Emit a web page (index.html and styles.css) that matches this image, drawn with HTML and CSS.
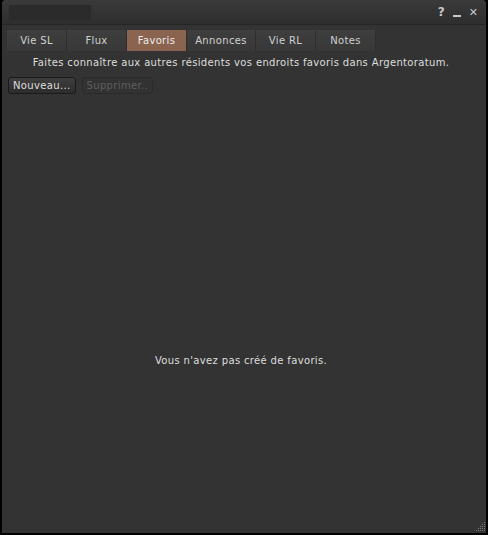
FILE: index.html
```html
<!DOCTYPE html>
<html lang="fr">
<head>
    <meta charset="UTF-8">
    <title>Favoris</title>
    <link rel="stylesheet" href="styles.css">
</head>
<body>
    <div class="floater">
        <div class="titlebar">
            <div class="title-slot"></div>
            <div class="title-buttons">
                <span class="tb-btn">?</span>
                <span class="tb-btn minimize"></span>
                <span class="tb-btn close">&#x2715;</span>
            </div>
        </div>
        <div class="tabs">
            <div class="tab">Vie SL</div>
            <div class="tab">Flux</div>
            <div class="tab active">Favoris</div>
            <div class="tab wide">Annonces</div>
            <div class="tab">Vie RL</div>
            <div class="tab">Notes</div>
        </div>
        <p class="hint">Faites connaître aux autres résidents vos endroits favoris dans Argentoratum.</p>
        <div class="actions">
            <button class="btn">Nouveau...</button>
            <button class="btn" disabled>Supprimer..</button>
        </div>
        <div class="picks-list">
            <div class="empty">Vous n'avez pas créé de favoris.</div>
        </div>
        <svg class="grip" width="12" height="12" viewBox="0 0 12 12">
            <g fill="#7a7a7a">
                <rect x="10" y="1" width="1" height="1"/>
                <rect x="8" y="3" width="1" height="1"/><rect x="10" y="3" width="1" height="1"/>
                <rect x="6" y="5" width="1" height="1"/><rect x="8" y="5" width="1" height="1"/><rect x="10" y="5" width="1" height="1"/>
                <rect x="4" y="7" width="1" height="1"/><rect x="6" y="7" width="1" height="1"/><rect x="8" y="7" width="1" height="1"/><rect x="10" y="7" width="1" height="1"/>
                <rect x="2" y="9" width="1" height="1"/><rect x="4" y="9" width="1" height="1"/><rect x="6" y="9" width="1" height="1"/><rect x="8" y="9" width="1" height="1"/><rect x="10" y="9" width="1" height="1"/>
            </g>
        </svg>
    </div>
</body>
</html>
```

FILE: styles.css
```css
:root {
    --window-bg: #333333;
    --title-top: #3a3a3a;
    --title-bottom: #2e2e2e;
    --tab-bg: #3b3b3b;
    --tab-active: #8b6450;
    --text-primary: #dedede;
    --text-muted: #5f5f5f;
}

html, body {
    margin: 0;
    height: 100%;
    background-color: #000000;
}

body {
    font-family: "DejaVu Sans", sans-serif;
    font-size: 10px;
    letter-spacing: 0.35px;
    color: var(--text-primary);
    padding: 0 2px 2px 2px;
    box-sizing: border-box;
}

.floater {
    position: relative;
    height: 100%;
    background-color: var(--window-bg);
    border-radius: 4px 4px 0 0;
    display: flex;
    flex-direction: column;
}

.titlebar {
    height: 24px;
    display: flex;
    align-items: center;
    justify-content: space-between;
    background: linear-gradient(var(--title-top), var(--title-bottom));
    border-bottom: 1px solid #262626;
    border-radius: 4px 4px 0 0;
}

.title-slot {
    width: 82px;
    height: 15px;
    margin-left: 7px;
    background-color: #2b2b2b;
}

.title-buttons {
    display: flex;
    align-items: center;
    gap: 8px;
    margin-right: 8px;
    color: #c8c8c8;
    font-weight: bold;
    font-size: 12px;
    letter-spacing: 0;
}

.minimize {
    width: 8px;
    height: 2px;
    margin-top: 8px;
    background-color: #c8c8c8;
}

.close {
    font-weight: normal;
    font-size: 11px;
}

.tabs {
    display: flex;
    margin: 5px 0 0 5px;
}

.tab {
    width: 59px;
    height: 21px;
    line-height: 21px;
    text-align: center;
    color: #d0d0d0;
    background: linear-gradient(#3e3e3e, #383838);
    border-right: 1px solid #2e2e2e;
}

.tab.wide {
    width: 68px;
}

.tab.active {
    color: #ececec;
    background: var(--tab-active);
}

.hint {
    margin: 5px 6px 0 0;
    text-align: center;
    line-height: 13px;
}

.actions {
    display: flex;
    gap: 6px;
    margin: 8px 0 0 6px;
}

.btn {
    height: 17px;
    padding: 0 4px;
    font-family: inherit;
    font-size: 10px;
    letter-spacing: 0.35px;
    color: var(--text-primary);
    background: linear-gradient(#3e3e3e, #2c2c2c);
    border: 1px solid #1a1a1a;
    border-radius: 3px;
}

.btn:disabled {
    color: var(--text-muted);
    background: #323232;
    border-color: #2a2a2a;
}

.picks-list {
    flex: 1;
    display: flex;
    align-items: center;
    justify-content: center;
    padding-right: 6px;
}

.empty {
    margin-top: 94px;
}

.grip {
    position: absolute;
    right: 0;
    bottom: 0;
}
```
